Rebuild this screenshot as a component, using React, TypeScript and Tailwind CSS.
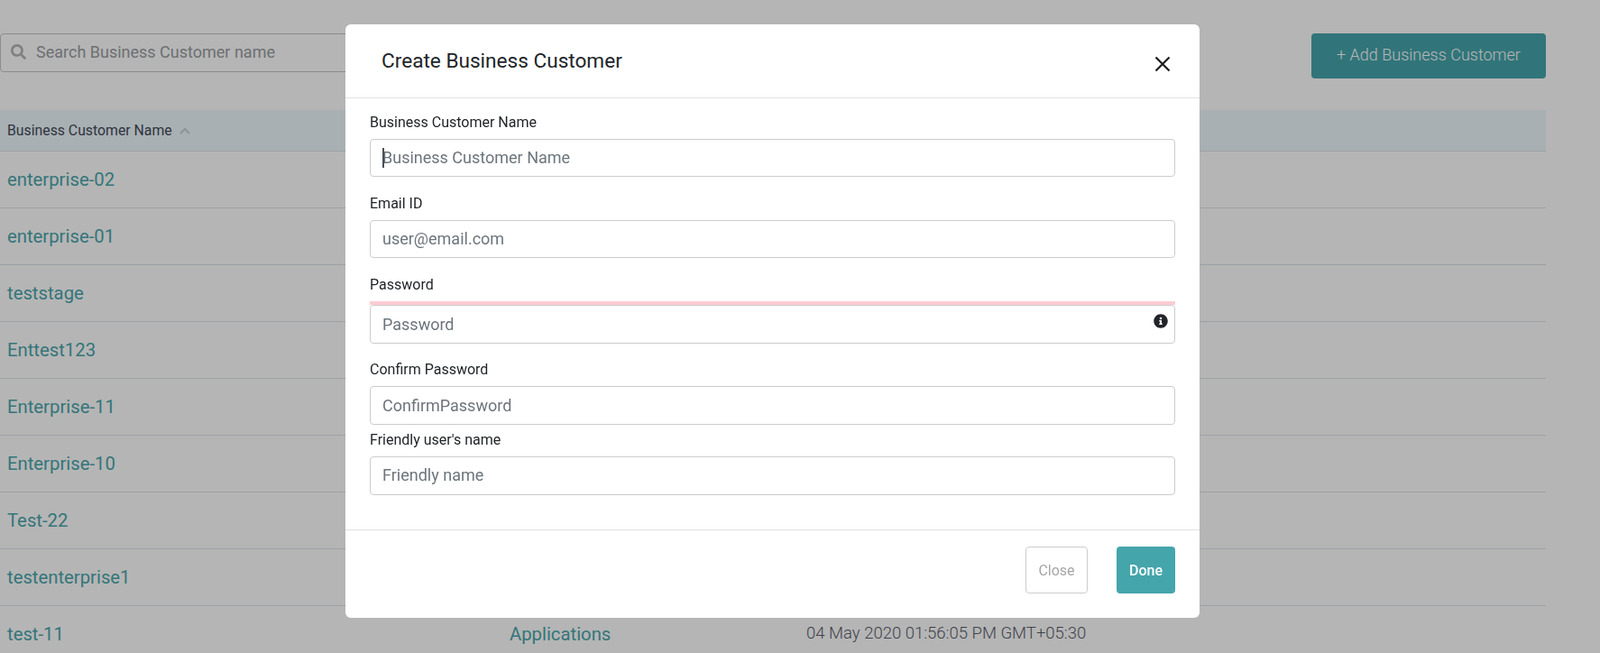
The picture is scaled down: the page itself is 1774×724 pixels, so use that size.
import { FaInfoCircle, FaSearch } from "react-icons/fa";

const customers = [
    "enterprise-02",
    "enterprise-01",
    "teststage",
    "Enttest123",
    "Enterprise-11",
    "Enterprise-10",
    "Test-22",
    "testenterprise1",
    "test-11",
]

const inputClass = "w-full border border-[#ccc] rounded-[4px] pl-[13px] pr-[14px] text-[18px] text-[#495057] placeholder:text-[#6c757d] bg-white outline-none"
const labelClass = "block pt-[1px] h-[24px] text-[16px] leading-[24px] text-[#212529] mb-[7px]"

const Field = (props: { label: string, placeholder: string, className: string, inputClassName: string }) => {
    const { label, placeholder, className, inputClassName } = props
    return (
        <div className={className}>
            <label className={labelClass}>{label}</label>
            <input type="text" placeholder={placeholder} className={`${inputClass} ${inputClassName}`} />
        </div>
    )
}

const App = () => {
    return (
        <div className="relative h-screen overflow-hidden bg-white font-['Roboto',sans-serif]">
            <div className="w-[1714px] pt-[37px]">
                <div className="flex justify-between items-start">
                    <div className="flex items-center w-[500px] h-[43px] border border-[#c4c4c4] rounded-[4px] pl-[11px] pb-[2px]">
                        <FaSearch className="text-[17px] text-[#b5b5b5]" />
                        <span className="ml-[11px] text-[18px] text-[#9a9da2]">Search Business Customer name</span>
                    </div>
                    <button className="w-[260px] h-[50px] pb-[4px] bg-[#46a5ad] rounded-[4px] text-white text-[18px] font-light">+ Add Business Customer</button>
                </div>
                <div className="mt-[35px] h-[46px] flex items-center gap-[8px] pl-[8px] bg-[#edf8fc] border-b border-[#dee2e6] text-[15.8px] text-[#454a5a]">
                    Business Customer Name
                    <svg width="12" height="8" viewBox="0 0 12 8" fill="none" stroke="#c9ced1" strokeWidth="2"><path d="M1 7l5-5 5 5" /></svg>
                </div>
                {customers.map((name, i) => (
                    <div key={name} className="flex items-center h-[63px] border-b border-[#dee2e6] text-[20.3px]">
                        <a className="w-[565px] pl-[8px] text-[#4ba6ac]">{name}</a>
                        {i === customers.length - 1 && (
                            <>
                                <a className="w-[329px] text-[#4ba6ac]">Applications</a>
                                <span className="text-[18.5px] font-light text-[#5a5e6c]">04 May 2020 01:56:05 PM GMT+05:30</span>
                            </>
                        )}
                    </div>
                ))}
            </div>

            <div className="fixed inset-0 bg-black/29"></div>

            <div className="absolute left-[383px] top-[27px] w-[947px] h-[658px] flex flex-col bg-white rounded-[6px]">
                <div className="flex justify-between h-[82px] border-b border-[#e2e2e2] shrink-0">
                    <h5 className="pl-[40px] pt-[24px] text-[22.6px] leading-[33px] text-[#212529]">Create Business Customer</h5>
                    <button className="mr-[32px] mt-[35px] h-[18px]">
                        <svg width="18" height="18" viewBox="0 0 18 18" fill="none" stroke="#1c1c1c" strokeWidth="2.2"><path d="M1.5 1.5l15 15M16.5 1.5l-15 15" /></svg>
                    </button>
                </div>
                <div className="relative px-[27px] pt-[14px] grow">
                    <Field label="Business Customer Name" placeholder="Business Customer Name" className="mb-[17px]" inputClassName="h-[42px] pb-[2px]" />
                    <span className="absolute left-[41px] top-[55px] w-[2px] h-[22px] bg-[#495057]"></span>
                    <Field label="Email ID" placeholder="user@email.com" className="mb-[17px]" inputClassName="h-[42px] pb-[2px]" />
                    <div className="relative mb-[16px]">
                        <label className={labelClass}>Password</label>
                        <div className="h-[4px] bg-[#ffccd2]"></div>
                        <input type="password" placeholder="Password" className={`${inputClass} h-[43px]`} />
                        <FaInfoCircle className="absolute right-[8px] top-[45px] text-[16px] text-[#212529]" />
                    </div>
                    <Field label="Confirm Password" placeholder="ConfirmPassword" className="mb-[4px]" inputClassName="h-[43px]" />
                    <Field label="Friendly user's name" placeholder="Friendly name" className="" inputClassName="h-[43px] pb-[2px]" />
                </div>
                <div className="flex justify-end gap-[32px] h-[98px] pt-[18px] pr-[27px] border-t border-[#e2e2e2] shrink-0">
                    <button className="w-[69px] h-[52px] pt-[2px] border border-[#ccc] rounded-[4px] text-[16px] text-[#a5a5a5]">Close</button>
                    <button className="w-[65px] h-[52px] pt-[2px] bg-[#44a5ab] rounded-[4px] text-[16px] font-medium text-white">Done</button>
                </div>
            </div>
        </div>
    )
}

export default App;
